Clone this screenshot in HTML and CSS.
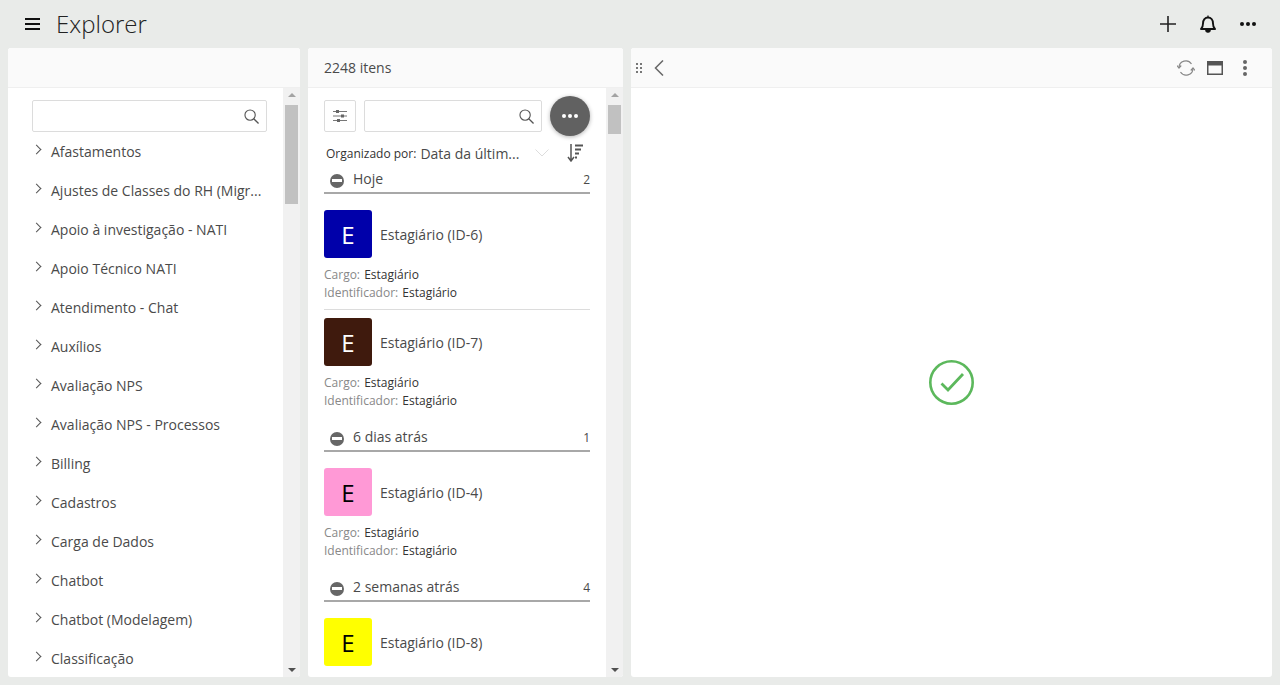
FILE: index.html
```html
<!DOCTYPE html>
<html lang="pt">
<head>
  <meta charset="UTF-8" />
  <title>Explorer</title>
  <link rel="stylesheet" href="styles.css">
</head>
<body>

  <header class="topbar">
    <svg class="menu-icon" width="15" height="12" viewBox="0 0 15 12"><path d="M0 1h15M0 6h15M0 11h15" stroke="#111" stroke-width="2"/></svg>
    <h1>Explorer</h1>
    <div class="top-actions">
      <svg width="16" height="16" viewBox="0 0 16 16"><path d="M8 0v16M0 8h16" stroke="#222" stroke-width="1.6"/></svg>
      <svg width="16" height="18" viewBox="0 0 16 18"><path d="M1 14c1.600-1.400 2-2.600 2-5.500C3 5 5 2.500 8 2.500S13 5 13 8.500c0 2.900.4 4.100 2 5.500z" fill="none" stroke="#111" stroke-width="1.900" stroke-linejoin="round"/><path d="M8 .6v2M5.800 15h4.400c0 1.200-1 2.200-2.200 2.200S5.800 16.200 5.800 15z" stroke="#111" stroke-width="1.200" fill="#111"/></svg>
      <svg width="16" height="4" viewBox="0 0 16 4"><circle cx="2" cy="2" r="2" fill="#111"/><circle cx="8" cy="2" r="2" fill="#111"/><circle cx="14" cy="2" r="2" fill="#111"/></svg>
    </div>
  </header>

  <main class="panels">

    <section class="panel panel-tree">
      <div class="panel-head"></div>
      <div class="panel-body">
        <div class="panel-content tree">
          <div class="search tree-search">
            <svg class="search-icon" width="15" height="15" viewBox="0 0 16 16"><circle cx="6.500" cy="6.500" r="5.500" fill="none" stroke="#555" stroke-width="1.200"/><path d="M10.400 10.400L15.500 15.500" stroke="#555" stroke-width="1.400"/></svg>
          </div>
          <ul class="tree-list">
            <li>Afastamentos</li>
            <li>Ajustes de Classes do RH (Migr...</li>
            <li>Apoio à investigação - NATI</li>
            <li>Apoio Técnico NATI</li>
            <li>Atendimento - Chat</li>
            <li>Auxílios</li>
            <li>Avaliação NPS</li>
            <li>Avaliação NPS - Processos</li>
            <li>Billing</li>
            <li>Cadastros</li>
            <li>Carga de Dados</li>
            <li>Chatbot</li>
            <li>Chatbot (Modelagem)</li>
            <li>Classificação</li>
          </ul>
        </div>
        <div class="scrollbar">
          <span class="arrow-up"></span>
          <span class="thumb thumb-tree"></span>
          <span class="arrow-down"></span>
        </div>
      </div>
    </section>

    <section class="panel panel-list">
      <div class="panel-head count">2248 itens</div>
      <div class="panel-body">
        <div class="panel-content list">
          <div class="toolbar">
            <button class="filter-btn">
              <svg width="16" height="14" viewBox="0 0 16 14"><path d="M1 2.500h14M1 7h14M1 11.500h14" stroke="#777" stroke-width="1"/><rect x="4" y="1" width="3" height="3" fill="#666"/><rect x="9" y="5.500" width="3" height="3" fill="#666"/><rect x="5" y="10" width="3" height="3" fill="#666"/></svg>
            </button>
            <div class="search list-search">
              <svg class="search-icon" width="15" height="15" viewBox="0 0 16 16"><circle cx="6.500" cy="6.500" r="5.500" fill="none" stroke="#555" stroke-width="1.200"/><path d="M10.400 10.400L15.500 15.500" stroke="#555" stroke-width="1.400"/></svg>
            </div>
            <button class="round-btn">
              <svg width="16" height="4" viewBox="0 0 16 4"><circle cx="2" cy="2" r="2" fill="#fff"/><circle cx="8" cy="2" r="2" fill="#fff"/><circle cx="14" cy="2" r="2" fill="#fff"/></svg>
            </button>
          </div>

          <div class="sort-row">
            <span class="sort-label">Organizado por:</span>
            <span class="sort-value">Data da últim...</span>
            <svg class="sort-chevron" width="14" height="8" viewBox="0 0 14 8"><path d="M.5.500L7 7 13.500.500" fill="none" stroke="#ddd" stroke-width="1"/></svg>
            <svg class="sort-icon" width="16" height="18" viewBox="0 0 16 18"><path d="M4 0v16M1 13l3 4 3-4" fill="none" stroke="#555" stroke-width="1.500"/><path d="M8 1.500h8M8 5.500h6M8 9.500h4M8 13.500h2" stroke="#555" stroke-width="1.800"/></svg>
          </div>

          <div class="group-head">
            <span class="minus"></span><span class="group-name">Hoje</span><span class="group-count">2</span>
          </div>
          <article class="card with-line">
            <div class="card-top"><div class="avatar blue">E</div><span class="card-name">Estagiário (ID-6)</span></div>
            <p class="field"><span>Cargo:</span> Estagiário</p>
            <p class="field"><span>Identificador:</span> Estagiário</p>
          </article>
          <article class="card second">
            <div class="card-top"><div class="avatar brown">E</div><span class="card-name">Estagiário (ID-7)</span></div>
            <p class="field"><span>Cargo:</span> Estagiário</p>
            <p class="field"><span>Identificador:</span> Estagiário</p>
          </article>

          <div class="group-head">
            <span class="minus"></span><span class="group-name">6 dias atrás</span><span class="group-count">1</span>
          </div>
          <article class="card">
            <div class="card-top"><div class="avatar pink">E</div><span class="card-name">Estagiário (ID-4)</span></div>
            <p class="field"><span>Cargo:</span> Estagiário</p>
            <p class="field"><span>Identificador:</span> Estagiário</p>
          </article>

          <div class="group-head">
            <span class="minus"></span><span class="group-name">2 semanas atrás</span><span class="group-count">4</span>
          </div>
          <article class="card">
            <div class="card-top"><div class="avatar yellow">E</div><span class="card-name">Estagiário (ID-8)</span></div>
          </article>
        </div>
        <div class="scrollbar">
          <span class="arrow-up"></span>
          <span class="thumb thumb-list"></span>
          <span class="arrow-down"></span>
        </div>
      </div>
    </section>

    <section class="panel panel-detail">
      <div class="panel-head detail-head">
        <svg class="drag" width="6" height="10" viewBox="0 0 6 10"><path d="M0 0h2v2H0zM4 0h2v2H4zM0 4h2v2H0zM4 4h2v2H4zM0 8h2v2H0zM4 8h2v2H4z" fill="#777"/></svg>
        <svg class="back" width="10" height="16" viewBox="0 0 10 16"><path d="M9 .5L1.500 8 9 15.500" fill="none" stroke="#666" stroke-width="1.500"/></svg>
        <div class="detail-actions">
          <svg width="18" height="16" viewBox="0 0 18 16"><path d="M2 7.500A6.800 6.800 0 0 1 14.500 4M16 8.500A6.800 6.800 0 0 1 3.500 12" fill="none" stroke="#888" stroke-width="1.200"/><path d="M0 5.500l2 2.500 2.200-2.500M13.800 10.500l2.200-2.500 2 2.500" fill="none" stroke="#888" stroke-width="1.200"/></svg>
          <svg class="window-icon" width="16" height="14" viewBox="0 0 16 14"><path d="M0 0h16v14H0zM1.500 4.500v8h13v-8z" fill="#555" fill-rule="evenodd"/></svg>
          <svg width="4" height="16" viewBox="0 0 4 16"><circle cx="2" cy="2" r="2" fill="#666"/><circle cx="2" cy="8" r="2" fill="#666"/><circle cx="2" cy="14" r="2" fill="#666"/></svg>
        </div>
      </div>
      <div class="detail-body">
        <svg width="46" height="46" viewBox="0 0 46 46"><circle cx="22.500" cy="22.500" r="21.200" fill="none" stroke="#5cb85c" stroke-width="2.600"/><path d="M12.500 23.500l6.500 6.500 15-16" fill="none" stroke="#5cb85c" stroke-width="2.800"/></svg>
      </div>
    </section>

  </main>

</body>
</html>
```

FILE: styles.css
```css
* {
  box-sizing: border-box;
}
body {
  margin: 0;
  height: 685px;
  overflow: hidden;
  display: flex;
  flex-direction: column;
  font-family: "Open Sans", sans-serif;
  font-size: 14px;
  color: #4a4a4a;
  background-color: #e9ebe9;
}
.topbar {
  height: 48px;
  flex: none;
  display: flex;
  align-items: center;
  padding: 0 24px 0 25px;
}
.menu-icon {
  margin-right: 16px;
}
.topbar h1 {
  margin: 0 0 2px;
  font-size: 24px;
  font-weight: 300;
  color: #222;
}
.top-actions {
  margin-left: auto;
  display: flex;
  align-items: center;
  gap: 24px;
}
.panels {
  flex: 1;
  min-height: 0;
  display: flex;
  gap: 8px;
  padding: 0 8px 8px;
}
.panel {
  display: flex;
  flex-direction: column;
  min-height: 0;
  background-color: white;
  border-radius: 3px;
  overflow: hidden;
}
.panel-tree {
  width: 292px;
}
.panel-list {
  width: 315px;
}
.panel-detail {
  flex: 1;
}
.panel-head {
  height: 40px;
  flex: none;
  background-color: #fafafa;
  border-bottom: 1px solid #efefef;
}
.panel-body {
  flex: 1;
  min-height: 0;
  display: flex;
}
.panel-content {
  flex: 1;
  min-width: 0;
  overflow: hidden;
}
.scrollbar {
  width: 17px;
  flex: none;
  display: flex;
  flex-direction: column;
  align-items: center;
  background-color: #f1f1f1;
}
.arrow-up, .arrow-down {
  width: 0;
  height: 0;
  border-left: 4px solid transparent;
  border-right: 4px solid transparent;
}
.arrow-up {
  margin-top: 5px;
  border-bottom: 4px solid #a3a3a3;
}
.arrow-down {
  margin-top: auto;
  margin-bottom: 5px;
  border-top: 4px solid #505050;
}
.thumb {
  width: 13px;
  margin-top: 8px;
  background-color: #c1c1c1;
}
.thumb-tree {
  height: 99px;
}
.thumb-list {
  height: 29px;
}

.search {
  height: 32px;
  display: flex;
  align-items: center;
  justify-content: flex-end;
  padding-right: 7px;
  background-color: white;
  border: 1px solid #dcdcdc;
  border-radius: 2px;
}
.tree {
  padding: 12px 16px 0 24px;
}
.tree-list {
  list-style: none;
  margin: 0;
  padding: 0;
}
.tree-list li {
  position: relative;
  height: 39px;
  line-height: 39px;
  padding-left: 19px;
  white-space: nowrap;
}
.tree-list li::before {
  content: "";
  position: absolute;
  left: 1px;
  top: 14px;
  width: 6px;
  height: 6px;
  border-top: 1px solid #555;
  border-right: 1px solid #555;
  transform: rotate(45deg);
}
.count {
  padding-left: 16px;
  line-height: 39px;
}
.list {
  padding: 8px 16px 0;
}
.toolbar {
  height: 40px;
  display: flex;
  align-items: center;
  gap: 8px;
}
.filter-btn {
  width: 32px;
  height: 32px;
  padding: 0;
  display: flex;
  align-items: center;
  justify-content: center;
  background-color: white;
  border: 1px solid #dcdcdc;
  border-radius: 2px;
}
.list-search {
  flex: 1;
  min-width: 0;
}
.round-btn {
  width: 40px;
  height: 40px;
  padding: 0;
  border: none;
  border-radius: 50%;
  display: flex;
  align-items: center;
  justify-content: center;
  background-color: #616161;
  box-shadow: 0 1px 4px rgba(0, 0, 0, 0.3);
}
.sort-row {
  height: 31px;
  display: flex;
  align-items: center;
  padding: 3px 0 0 2px;
  white-space: nowrap;
}
.sort-label {
  font-size: 12px;
  color: #333;
  margin-right: 4px;
}
.sort-value {
  font-size: 14px;
  width: 107px;
}
.sort-chevron {
  margin-left: 8px;
}
.sort-icon {
  margin-left: 18px;
}
.group-head {
  height: 27px;
  display: flex;
  align-items: center;
  padding: 0 0 3px 6px;
  border-bottom: 2px solid #a8a8a8;
}
.minus {
  position: relative;
  width: 14px;
  height: 14px;
  margin: 6px 9px 0 0;
  border-radius: 50%;
  background-color: #666;
}
.minus::after {
  content: "";
  position: absolute;
  left: 2px;
  right: 2px;
  top: 5px;
  height: 3px;
  background-color: white;
}
.group-count {
  margin: 2px 0 0 auto;
  font-size: 12px;
}
.card {
  padding-top: 16px;
  padding-bottom: 15px;
}
.card.with-line {
  padding-bottom: 7px;
  border-bottom: 1px solid #dcdcdc;
}
.card.second {
  padding-top: 8px;
}
.card-top {
  display: flex;
  align-items: center;
  gap: 8px;
  margin-bottom: 8px;
}
.avatar {
  width: 48px;
  height: 48px;
  flex: none;
  display: flex;
  align-items: center;
  justify-content: center;
  font-size: 24px;
  border-radius: 3px;
}
.blue {
  background-color: #0000aa;
  color: white;
}
.brown {
  background-color: #3f1a0d;
  color: white;
}
.pink {
  background-color: #ff99d6;
  color: black;
}
.yellow {
  background-color: #ffff00;
  color: black;
}
.field {
  margin: 0;
  height: 18px;
  line-height: 18px;
  font-size: 12px;
  color: #333;
}
.field span {
  margin-right: 1px;
  color: #888;
}
.detail-head {
  display: flex;
  align-items: center;
  padding: 0 25px 0 5px;
}
.back {
  margin-left: 12px;
}
.detail-actions {
  margin-left: auto;
  display: flex;
  align-items: center;
  gap: 12px;
}
.window-icon {
  margin-right: 8px;
}
.detail-body {
  flex: 1;
  display: flex;
  align-items: center;
  justify-content: center;
}
```
